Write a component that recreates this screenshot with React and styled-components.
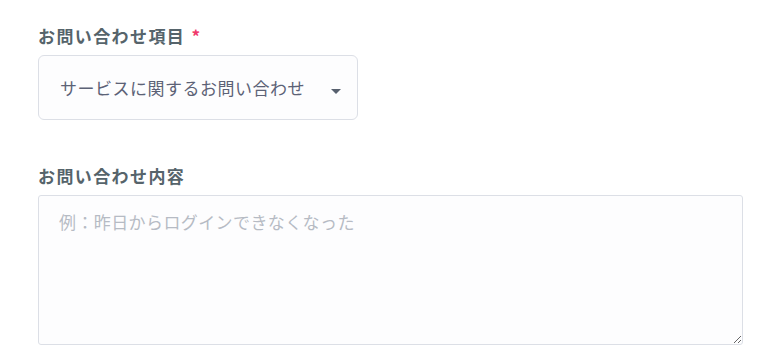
import React from 'react'
import styled, { createGlobalStyle } from 'styled-components'

const GlobalStyle = createGlobalStyle`
  body {
    margin: 0;
    background: #ffffff;
    font-family: "Noto Sans CJK JP", "Noto Sans", sans-serif;
  }
`

const Form = styled.form`
  padding: 23px 35px 0 38px;
  display: flex;
  flex-direction: column;
  gap: 43px;
`

const Field = styled.div`
  display: flex;
  flex-direction: column;
  gap: 7px;
`

const Label = styled.label`
  font-size: 17px;
  line-height: 25px;
  font-weight: 700;
  letter-spacing: 1.4px;
  color: #56646b;
`

const Required = styled.span`
  color: #f0386b;
  margin-left: 1px;
`

const SelectWrap = styled.div`
  position: relative;
  width: 320px;
`

const Select = styled.select`
  appearance: none;
  width: 100%;
  height: 65px;
  box-sizing: border-box;
  padding: 0 40px 0 21px;
  border: 1px solid #dcdfe6;
  border-radius: 6px;
  background: #fdfdfe;
  font-family: inherit;
  font-size: 17px;
  letter-spacing: 0.5px;
  color: #5c6276;
  outline: none;
`

const Caret = styled.span`
  position: absolute;
  right: 17px;
  top: 34px;
  width: 0;
  height: 0;
  border-left: 5px solid transparent;
  border-right: 5px solid transparent;
  border-top: 5px solid #57606e;
  pointer-events: none;
`

const TextArea = styled.textarea`
  width: 705px;
  height: 150px;
  box-sizing: border-box;
  padding: 13px 20px;
  border: 1px solid #dcdfe6;
  border-radius: 3px;
  background: #fdfdfe;
  font-family: inherit;
  font-size: 17px;
  line-height: 26px;
  letter-spacing: 0.4px;
  color: #5c6276;
  outline: none;

  &::placeholder {
    color: #b6bbc4;
  }
`

export default function App() {
  return (
    <>
      <GlobalStyle />
      <Form>
        <Field>
          <Label>
            お問い合わせ項目 <Required>*</Required>
          </Label>
          <SelectWrap>
            <Select defaultValue="service">
              <option value="service">サービスに関するお問い合わせ</option>
              <option value="other">その他のお問い合わせ</option>
            </Select>
            <Caret />
          </SelectWrap>
        </Field>
        <Field>
          <Label>お問い合わせ内容</Label>
          <TextArea placeholder="例：昨日からログインできなくなった" />
        </Field>
      </Form>
    </>
  )
}
